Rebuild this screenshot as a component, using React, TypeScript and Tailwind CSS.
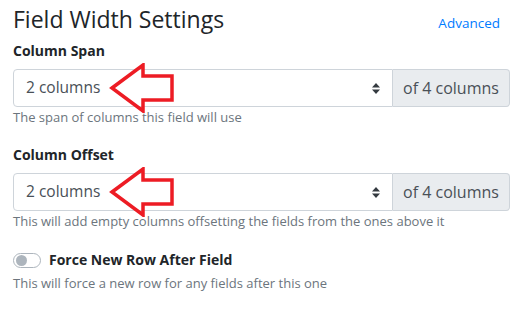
import React from 'react';

function Arrow() {
  return (
    <svg
      className="absolute left-[85px] top-[-6px] pointer-events-none"
      width="80"
      height="50"
      viewBox="0 0 80 50"
    >
      <polygon
        points="14,25 45,2 45,13 74,13 74,37 45,37 45,48"
        fill="none"
        stroke="#ed1c24"
        strokeWidth="3.5"
        strokeLinejoin="miter"
      />
    </svg>
  );
}

function Carets() {
  return (
    <svg width="8" height="11" viewBox="0 0 8 11" className="text-[#343a40]">
      <path d="M4 0 L8 4.5 L0 4.5 Z" fill="currentColor" />
      <path d="M4 11 L8 6.5 L0 6.5 Z" fill="currentColor" />
    </svg>
  );
}

function ColumnField({ label, help }: { label: string; help: string }) {
  return (
    <div>
      <div className="text-[14px] font-bold text-[#212529] leading-[20px]">{label}</div>
      <div className="relative mt-[8px] flex h-[38px] w-[497px]">
        <div className="flex flex-1 items-center justify-between rounded-l-[4px] border border-[#ced4da] bg-white pl-[12px] pr-[12px] text-[15.5px] text-[#495057]">
          <span>2 columns</span>
          <Carets />
        </div>
        <div className="flex w-[117px] items-center justify-center rounded-r-[4px] border border-l-0 border-[#ced4da] bg-[#e9ecef] text-[16px] text-[#495057]">
          of 4 columns
        </div>
        <Arrow />
      </div>
      <div className="mt-[1px] text-[13px] leading-[19px] text-[#6c757d]">{help}</div>
    </div>
  );
}

export default function App() {
  return (
    <div
      className="h-[316px] w-[532px] bg-white pl-[13px] pt-[2px]"
      style={{ fontFamily: '"Open Sans", "Noto Sans", sans-serif' }}
    >
      <div className="flex w-[487px] items-baseline justify-between">
        <h4 className="text-[23px] leading-[34px] text-[#212529]">Field Width Settings</h4>
        <a className="text-[13.5px] text-[#007bff]">Advanced</a>
      </div>
      <div className="mt-[5px]">
        <ColumnField label="Column Span" help="The span of columns this field will use" />
      </div>
      <div className="mt-[18px]">
        <ColumnField
          label="Column Offset"
          help="This will add empty columns offsetting the fields from the ones above it"
        />
      </div>
      <div className="mt-[19px] flex items-center gap-[8px]">
        <div className="flex h-[15px] w-[28px] items-center rounded-full border border-[#adb5bd] bg-white px-[2px]">
          <div className="h-[11px] w-[11px] rounded-full bg-[#adb5bd]" />
        </div>
        <span className="text-[14px] font-bold leading-[20px] text-[#212529]">
          Force New Row After Field
        </span>
      </div>
      <div className="mt-[4px] text-[13px] leading-[19px] text-[#6c757d]">
        This will force a new row for any fields after this one
      </div>
    </div>
  );
}
